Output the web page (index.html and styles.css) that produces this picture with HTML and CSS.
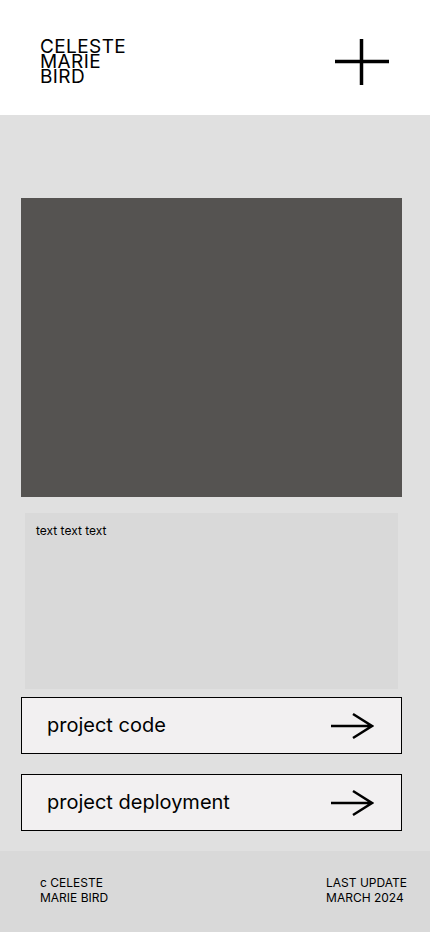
FILE: index.html
```html
<!DOCTYPE HTML>
<html>
<head>
<meta http-equiv="Content-Type" content="text/html; charset=utf-8">
<title>Celeste Marie Bird</title>
<link rel="stylesheet" href="styles.css">
</head>
<body>
	<header class="top">
		<div class="name">CELESTE<br>MARIE<br>BIRD</div>
		<!-- menu -->
		<svg class="plus" width="54" height="46" viewBox="0 0 54 46">
			<line x1="0" y1="22.5" x2="54" y2="22.5" stroke="#000" stroke-width="3.5"/>
			<line x1="26.5" y1="0" x2="26.5" y2="46" stroke="#000" stroke-width="3.5"/>
		</svg>
	</header>
	<main class="content">
		<div class="shot"></div>
		<div class="about">text text text</div>
		<a class="link" href="#">
			<span>project code</span>
			<svg class="arrow" width="43" height="28" viewBox="0 0 43 28">
				<path d="M0 14 H41 M22 2 L41 14 L22 26" fill="none" stroke="#000" stroke-width="2.5"/>
			</svg>
		</a>
		<a class="link" href="#">
			<span>project deployment</span>
			<svg class="arrow" width="43" height="28" viewBox="0 0 43 28">
				<path d="M0 14 H41 M22 2 L41 14 L22 26" fill="none" stroke="#000" stroke-width="2.5"/>
			</svg>
		</a>
	</main>
	<footer class="bottom">
		<div>c CELESTE<br>MARIE BIRD</div>
		<div class="updated">LAST UPDATE<br>MARCH 2024</div>
	</footer>
</body>
</html>
```
FILE: styles.css
```css
/* 页面 */
body {
	margin: 0;
	font-family: Inter, "Liberation Sans", sans-serif;
	color: #000;
	background: #e0e0e0;
}

.top {
	height: 115px;
	box-sizing: border-box;
	padding: 39px 41px 0 40px;
	background: #fff;
	display: flex;
	justify-content: space-between;
	align-items: flex-start;
}

.name {
	font-size: 19px;
	line-height: 15px;
	letter-spacing: 0.4px;
}

.plus {
	display: block;
}

/* 中间部分 */
.content {
	padding: 83px 28px 20px 21px;
	display: flex;
	flex-direction: column;
}

.shot {
	height: 299px;
	background: #555351;
}

.about {
	margin: 16px 4px 8px;
	height: 176px;
	box-sizing: border-box;
	padding: 10px 11px;
	background: #d9d9d9;
	font-size: 12px;
}

.link {
	height: 57px;
	box-sizing: border-box;
	border: 1px solid #000;
	background: #f2f0f1;
	padding: 0 27px 1px 25px;
	display: flex;
	align-items: center;
	justify-content: space-between;
	color: #000;
	text-decoration: none;
	font-size: 20px;
}

.link + .link {
	margin-top: 20px;
}

.arrow {
	display: block;
	margin-top: 1px;
}

/* 底部 */
.bottom {
	height: 81px;
	box-sizing: border-box;
	padding: 24px 24px 0 40px;
	background: #d9d9d9;
	display: flex;
	justify-content: space-between;
	font-size: 12px;
	line-height: 15px;
}

.updated {
	margin-right: -1px;
}
```
